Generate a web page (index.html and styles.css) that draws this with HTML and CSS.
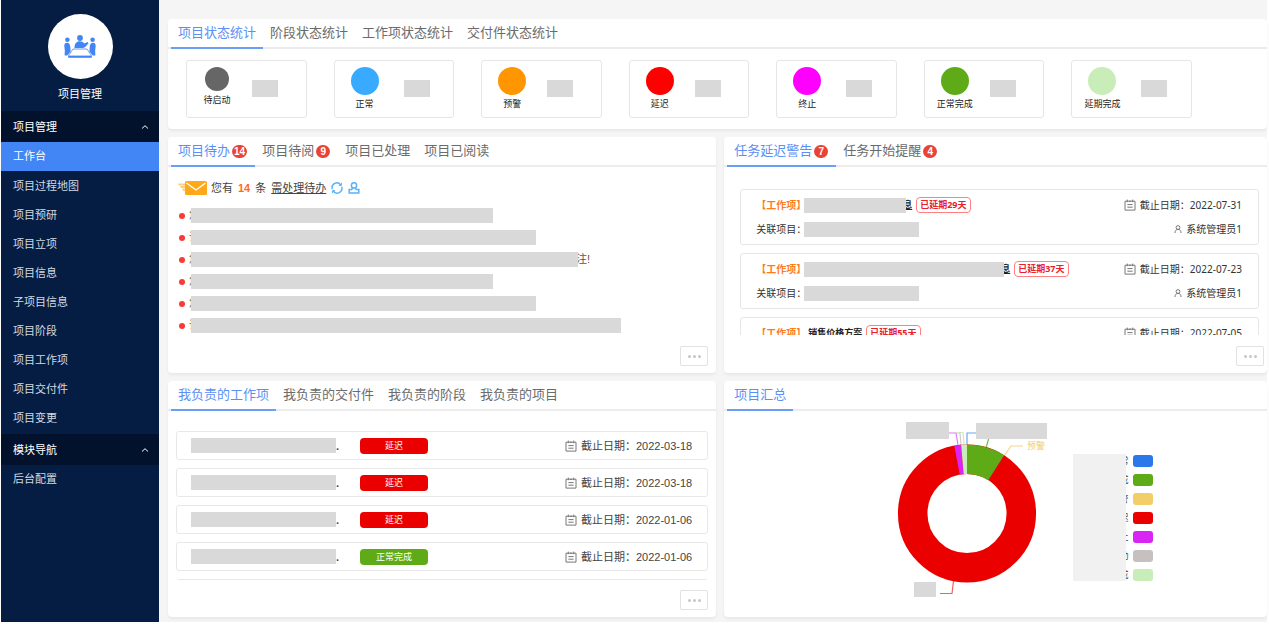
FILE: index.html
```html
<!DOCTYPE html>
<html lang="zh-CN">
<head>
<meta charset="utf-8">
<title>项目管理</title>
<meta name="viewport" content="width=device-width, initial-scale=1">
<link rel="stylesheet" href="styles.css">
</head>
<body>
<svg class="defs" width="0" height="0" aria-hidden="true">
  <symbol id="calendar" viewBox="0 0 12 12"><path d="M1 2.200h10v8.900H1zM3.300.6v2.600M8.700.6v2.600M5 2.200h2M3.400 5.600h5.200M3.400 8.200h5.200" fill="none" stroke="currentColor"/></symbol>
  <symbol id="person" viewBox="0 0 8 8"><path d="M1 8c0-2.400 1.200-3.600 3-3.600S7 5.600 7 8" fill="none" stroke="currentColor"/><circle cx="4" cy="2.500" r="1.900" fill="none" stroke="currentColor"/></symbol>
  <symbol id="chevron" viewBox="0 0 8 6"><path d="M1 4.500 4 1.700l3 2.800" fill="none" stroke="currentColor"/></symbol>
</svg>
<div class="shell">
  <aside class="sidebar">
    <div class="profile">
      <div class="avatar">
        <svg width="32" height="24" viewBox="0 0 32 24" fill="#4285f4" aria-hidden="true">
          <circle cx="16" cy="3" r="2.900"/><circle cx="3.400" cy="4.800" r="2.300"/><circle cx="28.600" cy="4.800" r="2.300"/>
          <path d="M10.500 13c0-4.500 2.200-6.700 5-6.700 2.300 0 3.500.8 4.700 2.300l3.600-1.500.6 1.300-3.200 3.600-2 1z"/>
          <path d="M.3 11c0-2.300 1-3.300 2.700-3.300 2 0 3 1.500 3.300 4.400l.3 4.400-3.300 4.100H.8c-.5-2 .3-3.400 0-5.300zM31.700 11c0-2.300-1-3.300-2.700-3.300-2 0-3 1.500-3.300 4.400l-.3 4.400 3.300 4.100h2.500c.5-2-.3-3.400 0-5.300z"/>
          <path d="M9 14h14l4.300 6.300v1.800H4.700v-1.800z" fill="#fff" stroke="#4285f4" stroke-width=".8"/>
          <path d="M4.300 20.600h23.400v2H4.300z"/>
        </svg>
      </div>
      <div class="profile-name">项目管理</div>
    </div>
    <nav>
      <button class="group">项目管理<svg width="8" height="6"><use href="#chevron"/></svg></button>
      <a class="item active" href="#">工作台</a>
      <a class="item" href="#">项目过程地图</a>
      <a class="item" href="#">项目预研</a>
      <a class="item" href="#">项目立项</a>
      <a class="item" href="#">项目信息</a>
      <a class="item" href="#">子项目信息</a>
      <a class="item" href="#">项目阶段</a>
      <a class="item" href="#">项目工作项</a>
      <a class="item" href="#">项目交付件</a>
      <a class="item" href="#">项目变更</a>
      <button class="group">模块导航<svg width="8" height="6"><use href="#chevron"/></svg></button>
      <a class="item" href="#">后台配置</a>
    </nav>
  </aside>

  <main class="main">
    <section class="panel wide">
      <div class="tabs"><button class="tab on">项目状态统计</button><button class="tab">阶段状态统计</button><button class="tab">工作项状态统计</button><button class="tab">交付件状态统计</button></div>
      <div class="stats">
        <div class="stat"><div class="stat-key"><i class="dot small gray"></i>待启动</div><i class="mask count"></i></div>
        <div class="stat"><div class="stat-key"><i class="dot blue"></i>正常</div><i class="mask count far"></i></div>
        <div class="stat"><div class="stat-key"><i class="dot orange"></i>预警</div><i class="mask count"></i></div>
        <div class="stat"><div class="stat-key"><i class="dot red"></i>延迟</div><i class="mask count"></i></div>
        <div class="stat"><div class="stat-key"><i class="dot magenta"></i>终止</div><i class="mask count far"></i></div>
        <div class="stat"><div class="stat-key"><i class="dot green"></i>正常完成</div><i class="mask count"></i></div>
        <div class="stat"><div class="stat-key"><i class="dot mint"></i>延期完成</div><i class="mask count far"></i></div>
      </div>
    </section>

    <section class="panel">
      <div class="tabs"><button class="tab on">项目待办<b class="badge">14</b></button><button class="tab">项目待阅<b class="badge">9</b></button><button class="tab">项目已处理</button><button class="tab">项目已阅读</button></div>
      <div class="todo">
        <div class="todo-head">
          <svg width="29" height="16" viewBox="0 0 29 16" aria-hidden="true"><path d="M0 3.500h7v2H0.800zM2 6h5v2H2.800zM4 8.500h3v2.500H5z" fill="#ffcf80"/><rect x="7" y="1" width="22" height="14" rx="1.500" fill="#ffa91a"/><path d="m8.500 3 9.500 7 9.500-7" fill="none" stroke="#fff" stroke-width="1.300"/></svg>
          <span>您有</span><b class="num">14</b><span>条</span><a href="#">需处理待办</a>
          <button class="icon" aria-label="刷新"><svg width="12" height="12" viewBox="0 0 12 12" fill="none" stroke="#5ab1f8" stroke-width="1.400"><path d="M1.300 7.200A4.800 4.800 0 0 1 9.800 3M10.700 4.800A4.800 4.800 0 0 1 2.200 9"/><path d="m10.600.9-.3 2.700-2.500-.4M1.400 11.100l.3-2.700 2.500.4" stroke-width="1"/></svg></button>
          <button class="icon" aria-label="人员"><svg width="12" height="12" viewBox="0 0 12 12" fill="none" stroke="#5ab1f8" stroke-width="1.500"><circle cx="6" cy="3.400" r="2.600"/><path d="M4.700 5.800 3.800 7.500H1.200v3.600h9.600V7.500H8.200l-.9-1.700"/></svg></button>
        </div>
        <ul class="todo-list">
          <li><span>您</span><i class="mask w302"></i></li>
          <li><span>请</span><i class="mask w345"></i></li>
          <li><span>您</span><i class="mask w387"></i><span class="tail">注!</span></li>
          <li><span>您</span><i class="mask w302"></i></li>
          <li><span>您</span><i class="mask w345"></i></li>
          <li><span>请</span><i class="mask w430"></i></li>
        </ul>
      </div>
      <button class="more" aria-label="更多"><i></i><i></i><i></i></button>
    </section>

    <section class="panel edge">
      <div class="tabs"><button class="tab on">任务延迟警告<b class="badge">7</b></button><button class="tab">任务开始提醒<b class="badge">4</b></button></div>
      <div class="alerts">
        <article class="alert">
          <div class="line"><b class="kind">【工作项】</b><i class="mask w102"></i><a class="name tucked" href="#">息</a><b class="late">已延期29天</b><span class="date"><svg width="12" height="12"><use href="#calendar"/></svg>截止日期：<time>2022-07-31</time></span></div>
          <div class="line"><span class="rel">关联项目：</span><i class="mask w115"></i><span class="date"><svg width="8" height="8"><use href="#person"/></svg>系统管理员1</span></div>
        </article>
        <article class="alert">
          <div class="line"><b class="kind">【工作项】</b><i class="mask w200"></i><a class="name tucked" href="#">息</a><b class="late">已延期37天</b><span class="date"><svg width="12" height="12"><use href="#calendar"/></svg>截止日期：<time>2022-07-23</time></span></div>
          <div class="line"><span class="rel">关联项目：</span><i class="mask w115"></i><span class="date"><svg width="8" height="8"><use href="#person"/></svg>系统管理员1</span></div>
        </article>
        <article class="alert">
          <div class="line"><b class="kind">【工作项】</b><a class="name" href="#">销售价格方案</a><b class="late">已延期55天</b><span class="date"><svg width="12" height="12"><use href="#calendar"/></svg>截止日期：<time>2022-07-05</time></span></div>
        </article>
      </div>
      <button class="more" aria-label="更多"><i></i><i></i><i></i></button>
    </section>

    <section class="panel">
      <div class="tabs"><button class="tab on">我负责的工作项</button><button class="tab">我负责的交付件</button><button class="tab">我负责的阶段</button><button class="tab">我负责的项目</button></div>
      <div class="works">
        <div class="work"><i class="mask w145"></i><b>.</b><span class="pill">延迟</span><span class="date"><svg width="12" height="12"><use href="#calendar"/></svg>截止日期：<time>2022-03-18</time></span></div>
        <div class="work"><i class="mask w145"></i><b>.</b><span class="pill">延迟</span><span class="date"><svg width="12" height="12"><use href="#calendar"/></svg>截止日期：<time>2022-03-18</time></span></div>
        <div class="work"><i class="mask w145"></i><b>.</b><span class="pill">延迟</span><span class="date"><svg width="12" height="12"><use href="#calendar"/></svg>截止日期：<time>2022-01-06</time></span></div>
        <div class="work"><i class="mask w145"></i><b>.</b><span class="pill done">正常完成</span><span class="date"><svg width="12" height="12"><use href="#calendar"/></svg>截止日期：<time>2022-01-06</time></span></div>
        <div class="work"></div>
      </div>
      <button class="more" aria-label="更多"><i></i><i></i><i></i></button>
    </section>

    <section class="panel edge">
      <div class="tabs"><button class="tab on">项目汇总</button></div>
      <div class="summary">
        <svg class="chart" width="170" height="190" viewBox="890 415 170 190" role="img" aria-label="项目汇总">
          <g fill="none" stroke-width="1.200">
            <path d="M967 445v-12h10" stroke="#6ea2f0"/>
            <path d="m986 448 4-14" stroke="#7dbb45"/>
            <path d="m1004 456 7-10h12" stroke="#f3d58c"/>
            <path d="M948 433h8l2 12" stroke="#e07af5"/>
            <path d="M956 433h4l1 12" stroke="#d0cccc"/>
            <path d="M958 432.500h5l1 12" stroke="#cdebbf"/>
            <path d="m953.500 581-1.500 12.500h-12" stroke="#f06060"/>
          </g>
          <g fill="none" stroke-width="29.500" transform="rotate(-90 967 513.500)">
            <circle cx="967" cy="513.500" r="54.300" stroke="#eb0000"/>
            <circle cx="967" cy="513.500" r="54.300" pathLength="360" stroke="#5fab17" stroke-dasharray="32.500 327.500"/>
            <circle cx="967" cy="513.500" r="54.300" pathLength="360" stroke="#d824f5" stroke-dasharray="5.600 354.400" stroke-dashoffset="-349.400"/>
            <circle cx="967" cy="513.500" r="54.300" pathLength="360" stroke="#c9edb8" stroke-dasharray="5 355" stroke-dashoffset="-355"/>
          </g>
          <text class="chart-warn" x="1027" y="449">预警</text>
          <path d="M906 422h43v17h-43zM976 423h71v16h-71zM914 582h22v15h-22z" fill="#d9d9d9"/>
        </svg>
        <ul class="legend">
          <li>正常<i class="c1"></i></li>
          <li>正常完成<i class="c2"></i></li>
          <li>预警<i class="c3"></i></li>
          <li>延迟<i class="c4"></i></li>
          <li>终止<i class="c5"></i></li>
          <li>待启动<i class="c6"></i></li>
          <li>延期完成<i class="c7"></i></li>
        </ul>
      </div>
    </section>
  </main>
</div>
</body>
</html>
```
FILE: styles.css
```css
* { box-sizing: border-box; }
body {
  margin: 0;
  padding: 0 2px 2px 1px;
  background: #fff;
  color: #444;
  font: 11px/16px "Liberation Sans", "Noto Sans CJK SC", sans-serif;
}
button { margin: 0; padding: 0; border: 0; background: none; color: inherit; font: inherit; cursor: pointer; }
a { color: inherit; }
ul { margin: 0; padding: 0; list-style: none; }
i { font-style: normal; }
svg { display: block; flex: none; }
.defs { position: absolute; }

.shell { display: flex; min-height: calc(100vh - 2px); background: #f5f5f5; }

/* Sidebar */
.sidebar { flex: none; width: 158px; background: #051d42; color: #d3d9e3; }
.profile { display: flex; flex-direction: column; align-items: center; gap: 7px; height: 111px; padding-top: 14px; color: #fff; }
.avatar { display: grid; place-items: center; width: 65px; height: 65px; border-radius: 50%; background: #fff; }
.group { display: flex; align-items: center; justify-content: space-between; width: 100%; height: 31px; padding: 0 10px 0 12px; background: #03122c; color: #fff; }
.item { display: block; height: 29px; padding-left: 12px; line-height: 29px; text-decoration: none; }
.item.active { background: #4285f4; color: #fff; }
.item.active + .item { margin-top: 1px; }
.item + .group { margin-top: 1px; }

/* Panels */
.main {
  flex: 1;
  min-width: 0;
  display: grid;
  grid-template-columns: 101fr 100fr;
  align-content: start;
  gap: 8px;
  padding: 19px 0 5px 9px;
}
.wide { grid-column: 1 / -1; }
.panel { display: flex; flex-direction: column; min-width: 0; padding-bottom: 7px; border-radius: 4px; background: #fff; box-shadow: 0 2px 3px rgba(0, 0, 0, .06); }
.tabs { display: flex; height: 30px; padding-left: 3px; border-bottom: 2px solid #ececec; }
.tab { display: flex; align-items: center; height: 30px; padding: 0 7px; border-bottom: 2px solid transparent; color: #6b6b6b; font-size: 13px; line-height: 20px; white-space: nowrap; }
.tab.on { border-color: #6b9ff7; color: #5b8ff5; }
.badge { min-width: 14px; height: 13px; margin: 1px 1px 0 2px; padding: 0 2px; border-radius: 7px; background: #ea4335; color: #fff; font-size: 10px; line-height: 13px; text-align: center; }
.mask { flex: none; position: relative; z-index: 1; height: 15px; background: #d9d9d9; }
.w102 { width: 102px; }
.w115 { width: 115px; }
.w145 { width: 145px; }
.w200 { width: 200px; }
.w302 { width: 302px; }
.w345 { width: 345px; }
.w387 { width: 387px; }
.w430 { width: 430px; }
.more { display: flex; align-items: center; justify-content: center; gap: 2px; align-self: flex-end; width: 28px; height: 20px; margin: auto 8px 0 0; border: 1px solid #e2e2e2; border-radius: 2px; }
.more i { width: 3px; height: 3px; border-radius: 50%; background: #c3c6cc; }
.edge .more { margin-right: 3px; }

/* Status cards */
.stats { display: grid; grid-template-columns: repeat(7, minmax(0, 1fr)); gap: 27px; padding: 11px 75px 4px 18px; }
.stat { display: flex; align-items: flex-start; height: 58px; padding-top: 6px; border: 1px solid #e6e6e6; border-radius: 3px; }
.stat-key { display: flex; flex-direction: column; align-items: center; width: 60px; color: #222; font-size: 9px; line-height: 18px; }
.dot { width: 28px; height: 28px; border-radius: 50%; }
.dot.small { width: 24px; height: 24px; }
.gray { background: #666; }
.blue { background: #38aaff; }
.orange { background: #ff9600; }
.red { background: #f00; }
.magenta { background: #f0f; }
.green { background: #5fab17; }
.mint { background: #c9edb8; }
.count { width: 26px; height: 17px; margin: 13px 0 0 5px; }
.count.far { margin-left: 9px; }

/* To-do */
.todo { padding: 12px 10px 0; }
.todo-head { display: flex; align-items: center; gap: 5px; height: 18px; }
.todo-head svg + span { margin-left: -1px; }
.num { color: #ff6a1a; }
.icon { width: 12px; height: 12px; }
.todo-list { padding-top: 7px; }
.todo-list li { display: flex; align-items: center; height: 22px; color: #77706a; }
.todo-list li::before { content: ""; width: 6px; height: 6px; margin: 1px 4px 0 1px; border-radius: 50%; background: #fb3a35; }
.todo-list .mask { margin-left: -9px; }
.todo-list .tail { margin-left: -2px; color: #555; }

/* Alerts */
.alerts { display: flex; flex-direction: column; gap: 8px; height: 146px; margin: 22px 8px 11px 16px; overflow: hidden; font-family: "Noto Sans", "Noto Sans CJK SC", sans-serif; font-size: 10px; }
.alert { flex: none; padding: 3px 16px 3px 15px; border: 1px solid #e6e6e6; border-radius: 3px; color: #333; }
.line { display: flex; align-items: center; height: 24px; white-space: nowrap; }
.kind { width: 48px; color: #ff7a1f; }
.rel { width: 48px; }
.name { margin-left: 4px; color: #222; font-weight: bold; font-size: 9px; }
.name.tucked { margin-left: -3px; }
.late { margin-left: 4px; padding: 0 3px; border: 1px solid #ff8080; border-radius: 4px; color: #e8202a; font-size: 9px; line-height: 14px; }
.date { display: flex; align-items: center; margin-left: auto; }
.date svg { margin-right: 4px; color: #777; }

/* Owned work */
.works { display: flex; flex-direction: column; gap: 8px; height: 149px; margin: 20px 8px 10px; overflow: hidden; }
.work { flex: none; display: flex; align-items: center; height: 29px; padding: 0 15px; border: 1px solid #e8e8e8; border-radius: 3px; }
.work .mask { margin-left: -1px; }
.pill { width: 68px; height: 16px; margin-left: 21px; border-radius: 4px; background: #eb0000; color: #fff; font-size: 9px; line-height: 16px; text-align: center; }
.pill.done { background: #5fab17; }

/* Summary chart */
.summary { display: flex; align-items: flex-start; justify-content: center; gap: 13px; padding: 4px 0 0 51px; }
.chart-warn { fill: #f3cd68; font-size: 9px; }
.legend { position: relative; width: 80px; padding-top: 36px; }
.legend::before { content: ""; position: absolute; left: 0; top: 39px; width: 53px; height: 127px; background: #f1f1f1; }
.legend li { display: flex; align-items: center; justify-content: flex-end; gap: 4px; height: 19px; font-size: 9px; }
.legend i { width: 20px; height: 12px; border-radius: 3px; }
.c1 { background: #2b78ea; }
.c2 { background: #5fab17; }
.c3 { background: #f3cd68; }
.c4 { background: #eb0000; }
.c5 { background: #d824f5; }
.c6 { background: #c6c0c0; }
.c7 { background: #c9edb8; }
```
